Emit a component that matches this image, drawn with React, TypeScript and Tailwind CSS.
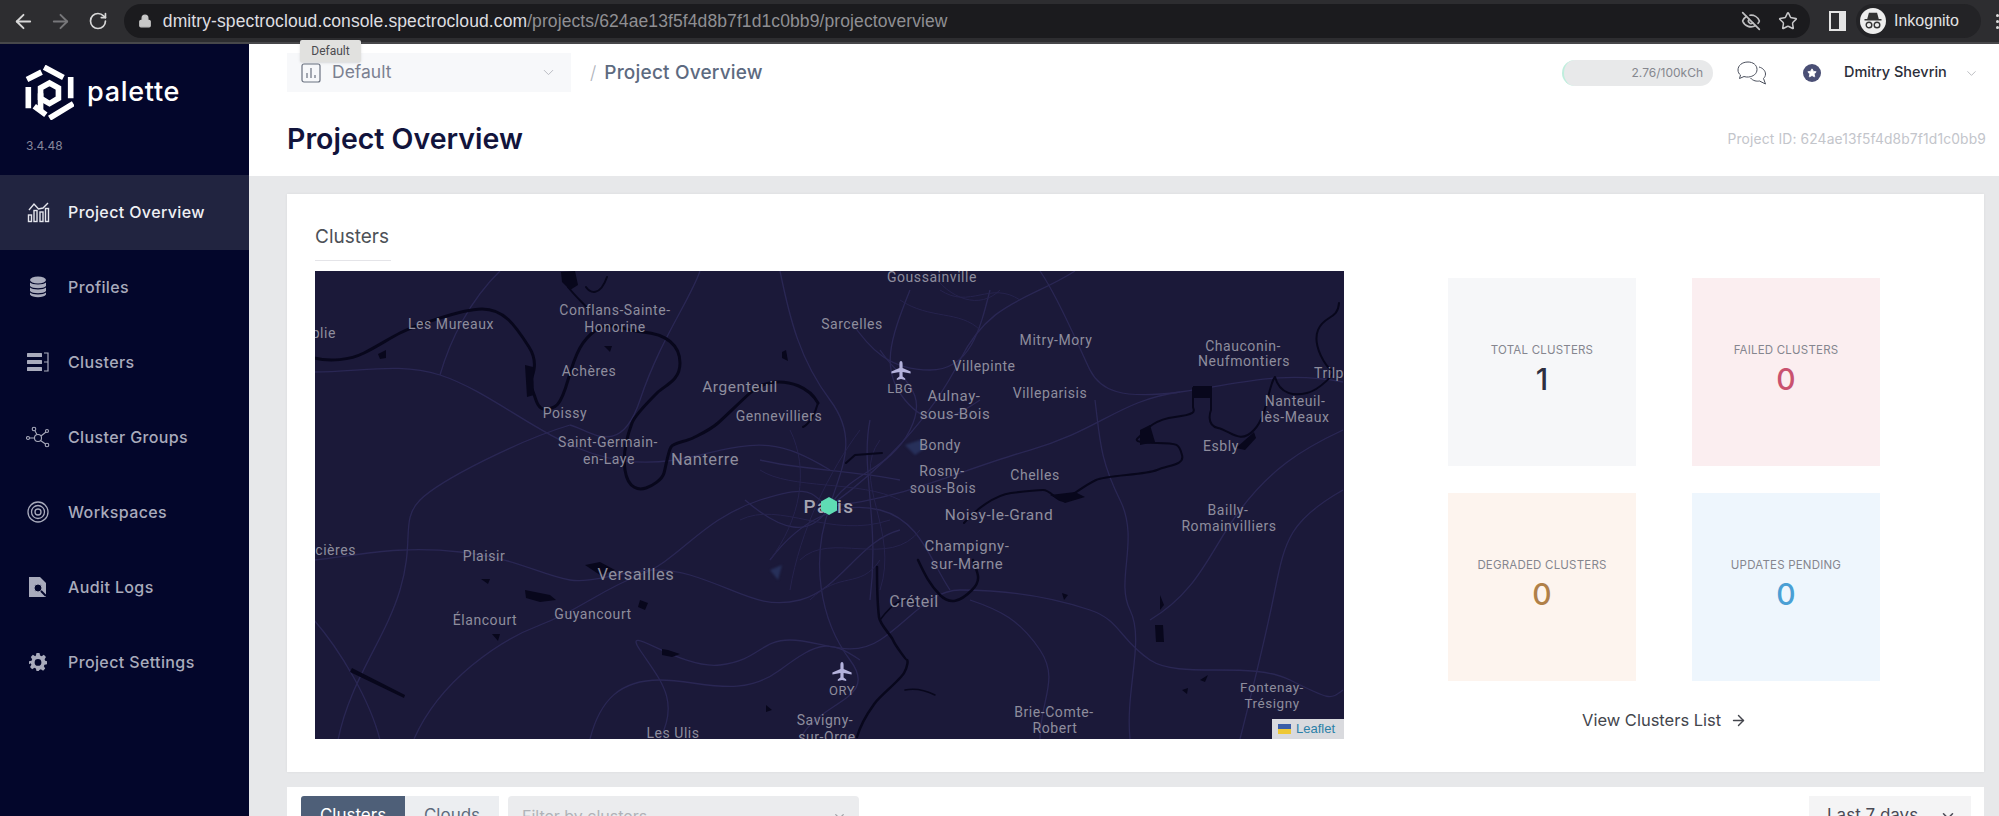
import React from "react";
import { ArrowLeft, ArrowRight, RotateCw, Lock, EyeOff, Star, ChevronDown, ArrowRight as Arrow } from "lucide-react";

const poppins = "font-['Inter','Noto_Sans',sans-serif]";

type L = [string, number, number, number?, string?];
const labels: L[] = [
  ["plie", 336, 333, 14, "end"], ["Les Mureaux", 451, 324], ["Conflans-Sainte-", 615, 310], ["Honorine", 615, 327],
  ["Achères", 589, 371], ["Poissy", 565, 413], ["Saint-Germain-", 608, 442], ["en-Laye", 609, 459],
  ["Nanterre", 705, 459, 16.5], ["Argenteuil", 740, 387, 15.5], ["Gennevilliers", 779, 416],
  ["Goussainville", 932, 277], ["Sarcelles", 852, 324], ["Mitry-Mory", 1056, 340], ["Villepinte", 984, 366],
  ["LBG", 900, 388, 13], ["Aulnay-", 954, 396, 15], ["sous-Bois", 955, 414, 15], ["Villeparisis", 1050, 393],
  ["Chauconin-", 1243, 346], ["Neufmontiers", 1244, 361], ["Trilp", 1314, 373, 14, "start"], ["Nanteuil-", 1295, 401],
  ["lès-Meaux", 1295, 417], ["Esbly", 1221, 446], ["Bondy", 940, 445], ["Rosny-", 942, 471], ["sous-Bois", 943, 488],
  ["Chelles", 1035, 475], ["Noisy-le-Grand", 999, 515, 15.5], ["Bailly-", 1228, 510], ["Romainvilliers", 1229, 526],
  ["Champigny-", 967, 546, 15], ["sur-Marne", 967, 564, 15], ["Créteil", 914, 601, 16], ["ORY", 842, 690, 13],
  ["Savigny-", 825, 720], ["sur-Orge", 827, 737], ["Brie-Comte-", 1054, 712], ["Robert", 1055, 728],
  ["Fontenay-", 1272, 687, 13.5], ["Trésigny", 1272, 703, 13.5], ["ncières", 356, 550, 14, "end"], ["Plaisir", 484, 556],
  ["Versailles", 636, 574, 16.5], ["Élancourt", 485, 620], ["Guyancourt", 593, 614], ["Les Ulis", 673, 733],
];

const roads = [
  "M314 372C360 372 400 362 440 375S520 420 560 440S640 470 700 455S780 440 830 470",
  "M314 560C360 555 400 545 460 552S540 575 570 580S640 560 690 575S760 610 800 600S860 540 900 530",
  "M338 740C350 680 385 640 400 590S400 520 420 500S520 440 570 425",
  "M414 739C440 680 500 640 540 625S600 590 640 575S700 520 760 500S810 500 830 505",
  "M660 739C680 700 660 680 640 650S680 670 720 665S760 640 790 640S850 660 880 640S930 590 960 590",
  "M830 506C900 500 960 470 1030 450S1120 400 1180 392S1280 370 1343 382",
  "M830 506C880 470 930 420 960 360S1030 300 1075 271",
  "M780 271C790 320 800 360 830 400S840 470 830 506",
  "M830 506C810 560 820 620 850 660S820 700 800 739",
  "M960 590C1020 590 1060 600 1090 610S1120 640 1150 660S1250 660 1290 680S1330 700 1343 690",
  "M1130 739C1125 690 1145 640 1130 610S1140 540 1120 500S1100 440 1095 400",
  "M1040 739C1040 700 1060 680 1040 650S1000 610 970 600",
  "M1180 392C1120 400 1100 390 1090 370S1060 300 1040 271",
  "M1240 739C1255 680 1265 640 1275 590S1290 520 1343 490",
  "M1343 430C1300 450 1270 470 1240 510S1200 590 1150 620",
  "M500 271C470 300 450 340 440 375",
  "M700 271C690 300 660 340 640 400S590 430 570 425",
  "M380 740C370 700 340 650 314 620",
  "M590 739C600 700 620 680 660 680S740 700 780 670S830 640 860 660",
  "M745 500C780 530 810 540 830 506S890 470 910 430S900 380 880 350",
  "M760 460C800 470 850 470 900 480",
  "M770 560C800 520 840 500 880 510S930 560 950 590",
  "M870 420C860 470 880 520 870 600",
  "M850 320C870 350 890 370 930 370S980 330 990 290",
  "M910 290C890 340 880 370 905 400S950 420 980 400",
];

const blobs = [
  "M561 272L575 271L578 285L570 290L562 282Z", "M378 354L386 350L386 358L380 359Z", "M604 346L612 346L610 352Z", "M782 352L786 350L788 361L782 358Z",
  "M525 365L533 367L534 395L527 397Z", "M525 590L550 595L556 600L540 602L526 598Z", "M481 579L490 579L488 584Z",
  "M492 634L500 634L498 641Z", "M662 649L668 650L680 654L672 657L662 655Z", "M352 668L405 695L404 698L350 672Z", "M585 565L600 562L615 570L600 575Z",
  "M1193 386L1212 386L1212 398L1193 398Z", "M1155 625L1163 625L1164 642L1156 642Z", "M1160 595L1164 605L1160 610Z",
  "M640 600L648 603L645 610L638 607Z", "M1050 495L1075 492L1085 497L1065 503Z", "M1140 430L1150 425L1155 442L1140 445Z",
  "M1254 432L1236 448L1245 450L1256 438Z", "M1200 680L1208 675L1205 682Z", "M1182 690L1188 688L1187 694Z", "M1062 593L1068 595L1064 600Z", "M766 705L772 710L766 712Z",
];

const Plane = ({ x, y }: { x: number; y: number }) => (
  <path transform={`translate(${x - 10} ${y - 10})`} fill="#b4b2dc" d="M10 0c1 0 1.6 1.2 1.6 3v4l8 3.6v2l-8-1.6v4.4l2.6 2V19L10 18l-4.200 1v-1.600l2.600-2V11l-8 1.600v-2l8-3.600V3c0-1.800.6-3 1.600-3z" />
);

function MapView() {
  return (
    <div className="relative w-[1029px] h-[468px] bg-[#1b1939] overflow-hidden">
      <svg viewBox="315 271 1029 468" width="1029" height="468" className="block">
        <g fill="none" stroke="#2a2754" strokeWidth="1.300" className="blur-[0.5px]">
          {roads.map((d) => <path key={d} d={d} />)}
          <path strokeWidth="1" stroke="#26234d" d="M760 470C790 490 860 480 900 500M790 430C810 470 800 520 770 560M860 430C830 470 800 530 790 590M740 520C780 500 830 540 890 520M800 560C830 530 890 570 920 530M880 440C850 480 900 530 880 590M810 600C840 570 860 590 880 560M900 300C930 320 960 310 980 330M930 271C950 300 980 310 1000 290M940 290C970 310 990 280 1020 300" />
        </g>
        <path d="M905 445L920 440L928 446L915 455Z M770 570L782 565L778 580Z" fill="#27305a" className="blur-[1px]" />
        <g className="blur-[0.5px]">
          <g fill="none" stroke="#08071c" strokeLinejoin="round" strokeLinecap="round">
            <path strokeWidth="3" d="M314 358C330 362 350 360 364 353S390 338 400 333S460 309 482 309S515 325 529 347S525 385 530 387S535 410 545 409S560 408 568 380S582 340 596 330S620 330 643 332S680 345 680 363S665 385 657 393S635 415 632 423S622 450 625 470S640 490 646 488S662 480 664 473S668 452 671 447S685 442 693 438S710 430 718 423S740 402 750 393S770 382 779 382S808 385 818 403" />
            <path strokeWidth="2" d="M818 403C815 415 808 425 803 427M568 287C575 296 585 305 589 310M586 287C590 293 600 297 607 277M846 463L855 455L882 453" />
            <path strokeWidth="2" d="M964 523C975 510 995 495 1011 493S1035 490 1043 490S1058 503 1064 500S1085 485 1096 480S1145 475 1157 470S1185 465 1182 455S1180 443 1157 443S1135 440 1139 437S1150 420 1175 417S1193 410 1193 407V388M1211 388V410S1205 425 1218 428S1240 445 1254 430S1268 385 1275 377C1280 395 1295 396 1307 393S1338 372 1332 370S1312 345 1318 330S1338 320 1339 303" />
            <path strokeWidth="2.500" d="M857 737C862 720 870 710 875 703S900 680 904 673S908 660 907 660S895 645 893 640S880 625 879 617S877 585 877 567M918 560C925 575 930 585 940 595S960 602 972 590S975 570 973 560" />
            <path strokeWidth="1.500" d="M880 620C895 600 905 595 918 605M905 690C915 688 925 690 935 695" />
          </g>
          <g fill="#08071c">{blobs.map((d) => <path key={d} d={d} />)}</g>
        </g>
        <g fill="#8e8d9d" fontFamily="Roboto, sans-serif" letterSpacing="0.55">
          {labels.map(([t, x, y, s, a], i) => (
            <text key={i} x={x} y={y} fontSize={s ?? 14} textAnchor={(a ?? "middle") as "middle" | "end" | "start"} dominantBaseline="central">{t}</text>
          ))}
          <text x="829" y="506" fontSize="19" fontWeight="500" textAnchor="middle" dominantBaseline="central" fill="#a6a5b2" letterSpacing="1.5">Paris</text>
        </g>
        <Plane x={901} y={371} />
        <Plane x={842} y={672} />
        <path d="M829 497L837 501.500V510.500L829 515L821 510.500V501.500Z" fill="#5fdcb4" />
      </svg>
      <div className="absolute right-0 bottom-0 w-[72px] h-[20px] bg-[#d9dade] flex items-center gap-[5px] pl-[6px] font-['Liberation_Sans',sans-serif] text-[13px] text-[#2a80a8]">
        <svg width="13" height="10" viewBox="0 0 13 10"><rect width="13" height="5" fill="#3b5ea8" /><rect y="5" width="13" height="5" fill="#eec836" /></svg>
        Leaflet
      </div>
    </div>
  );
}

function Logo() {
  return (
    <svg width="49" height="55" viewBox="0 0 148 165" fill="none" stroke="#fff" strokeWidth="17">
      <path d="M58 6L116 37M6 43L50 21M10 66V130M138 36V100M74 160L146 116M28 124L63 150" />
      <path d="M74 54L101 69V100L74 116L47 100V69Z" strokeWidth="17" />
      <path d="M47 85V137" strokeWidth="17" />
    </svg>
  );
}

const c = "#a9abbc";
const navIcons: Record<string, React.ReactNode> = {
  overview: (
    <svg width="23" height="22" viewBox="0 0 23 22" fill="none" stroke="#e4e5ec" strokeWidth="1.400">
      <path d="M2 9L7 3L11.500 8L16 7L21 2" />
      <rect x="1.500" y="14" width="3" height="6.500" /><rect x="7" y="9.500" width="3" height="11" /><rect x="13" y="11" width="3" height="9.500" /><rect x="18.500" y="7.500" width="3" height="13" />
    </svg>
  ),
  profiles: (
    <svg width="18" height="22" viewBox="0 0 18 22" fill={c}>
      <ellipse cx="9" cy="4" rx="8" ry="3.500" />
      <path d="M1 6.500C3 9 15 9 17 6.500V10C15 13 3 13 1 10Z" /><path d="M1 11.500C3 14 15 14 17 11.500V15C15 18 3 18 1 15Z" /><path d="M1 16.500C3 19 15 19 17 16.500V18.500C15 22 3 22 1 18.500Z" />
    </svg>
  ),
  clusters: (
    <svg width="22" height="20" viewBox="0 0 22 20" fill={c}>
      <rect x="0" y="1" width="15" height="4" rx="0.500" /><rect x="0" y="8" width="15" height="4" rx="0.500" /><rect x="0" y="15" width="15" height="4" rx="0.500" />
      <path d="M17 1H21V19H17M17 10H21" fill="none" stroke={c} strokeWidth="1.200" />
    </svg>
  ),
  groups: (
    <svg width="24" height="22" viewBox="0 0 24 22" fill="none" stroke={c} strokeWidth="1.100">
      <circle cx="12" cy="12" r="3.500" /><circle cx="8" cy="3" r="1.800" /><circle cx="21" cy="5" r="1.500" /><circle cx="2" cy="12" r="1.500" /><circle cx="21" cy="19" r="1.800" />
      <path d="M9 5L11 8.500M3.500 12H8.500M14.500 14.500L19.500 18M15 10L20 6" />
    </svg>
  ),
  workspaces: (
    <svg width="22" height="22" viewBox="0 0 22 22" fill="none" stroke={c} strokeWidth="1.300">
      <circle cx="11" cy="11" r="10" /><circle cx="11" cy="11" r="6.500" /><circle cx="11" cy="11" r="3" />
    </svg>
  ),
  audit: (
    <svg width="18" height="22" viewBox="0 0 18 22">
      <path d="M0 1H11L17 7V21H0Z" fill={c} />
      <circle cx="9" cy="12" r="4" fill="#03062b" stroke={c} strokeWidth="1" />
      <path d="M12 15L17 20" stroke="#03062b" strokeWidth="2" />
    </svg>
  ),
  settings: (
    <svg width="18" height="18" viewBox="0 0 24 24" fill={c}>
      <path fillRule="evenodd" d="M10 0h4l.8 3.400 2 .8L19.800 2.400l2.800 2.800-1.800 3 .8 2L24 11v4l-3.400.7-.8 2 1.800 3-2.800 2.800-3-1.800-2 .8L13 24h-3l-.8-3.500-2-.8-3 1.800-2.800-2.800 1.800-3-.8-2L0 15v-4l3.400-.8.8-2-1.800-3L5.200 2.400l3 1.800 1-.8zM12 8a4.500 4.500 0 1 0 0 9 4.500 4.500 0 0 0 0-9z" />
    </svg>
  ),
};

const nav: [string, string][] = [
  ["overview", "Project Overview"], ["profiles", "Profiles"], ["clusters", "Clusters"], ["groups", "Cluster Groups"],
  ["workspaces", "Workspaces"], ["audit", "Audit Logs"], ["settings", "Project Settings"],
];

function Stat({ label, value, bg, color }: { label: string; value: string; bg: string; color: string }) {
  return (
    <div className={`w-[188px] h-[188px] pt-[64px] flex flex-col items-center ${bg}`}>
      <div className="text-[11.500px] leading-[16px] tracking-[0.2px] text-[#85868f]">{label}</div>
      <div className={`text-[30px] leading-[38px] mt-[2px] font-medium ${color}`}>{value}</div>
    </div>
  );
}

export default function App() {
  return (
    <div className={`w-[1999px] h-[816px] overflow-hidden flex flex-col ${poppins}`}>
      <div className="h-[44px] shrink-0 bg-[#2d2d30] border-b-2 border-[#47474a] flex items-center pl-[12px] pr-[0px] font-['Liberation_Sans',sans-serif]">
        <ArrowLeft size={23} color="#d8d8d8" strokeWidth={2} />
        <ArrowRight size={23} color="#77777a" strokeWidth={2} className="ml-[14px]" />
        <RotateCw size={20} color="#d8d8d8" strokeWidth={2} className="ml-[16px]" />
        <div className="ml-[16px] w-[1690px] h-[34px] rounded-full bg-[#1b1b1e] flex items-center pl-[14px] pr-[12px]">
          <Lock size={14} color="#c8c8c8" fill="#c8c8c8" strokeWidth={2} />
          <div className="ml-[11px] text-[17.500px] tracking-[0.1px] text-[#dedee0] whitespace-nowrap">
            dmitry-spectrocloud.console.spectrocloud.com<span className="text-[#8f8f93]">/projects/624ae13f5f4d8b7f1d1c0bb9/projectoverview</span>
          </div>
          <EyeOff size={20} color="#c0c0c2" strokeWidth={2} className="ml-auto" />
          <Star size={20} color="#c8c8ca" strokeWidth={1.800} className="ml-[17px]" />
        </div>
        <div className="ml-[19px] w-[17px] h-[20px] border-[2.500px] border-[#e4e4e4] border-r-[7px] shrink-0" />
        <div className="ml-[10px] h-[34px] w-[125px] rounded-full bg-[#232326] flex items-center pl-[4px] shrink-0">
          <div className="w-[26px] h-[26px] rounded-full bg-[#ededed] flex items-center justify-center">
            <svg width="20" height="18" viewBox="0 0 20 18" fill="none">
              <path d="M5 7L6.500 1.500H13.500L15 7ZM1.500 7.800H18.500" stroke="#333" strokeWidth="1.500" fill="#333" />
              <circle cx="6" cy="13" r="2.800" stroke="#333" strokeWidth="1.400" /><circle cx="14" cy="13" r="2.800" stroke="#333" strokeWidth="1.400" />
            </svg>
          </div>
          <span className="ml-[8px] text-[16px] text-[#e2e2e4]">Inkognito</span>
        </div>
        <div className="ml-[15px] flex flex-col gap-[3px] shrink-0">
          <span className="w-[3px] h-[3px] bg-[#ddd] rounded-full" /><span className="w-[3px] h-[3px] bg-[#ddd] rounded-full" /><span className="w-[3px] h-[3px] bg-[#ddd] rounded-full" />
        </div>
      </div>

      <div className="flex-1 flex min-h-0">
        <aside className="w-[249px] shrink-0 bg-[#03062b] flex flex-col">
          <div className="h-[131px] shrink-0 pl-[25px] pt-[21px]">
            <div className="flex items-center">
              <Logo />
              <span className="ml-[13px] text-[27px] leading-[30px] font-medium tracking-[0.7px] text-white mt-[-2px]">palette</span>
            </div>
            <div className="mt-[19px] ml-[1px] text-[12px] leading-[14px] text-[#85879b]">3.4.48</div>
          </div>
          {nav.map(([k, t], i) => (
            <div key={k} className={`h-[75px] shrink-0 flex items-center pb-[2px] ${i === 0 ? "bg-[#212440] text-[#eff0f4]" : "text-[#a9abbc]"}`}>
              <div className="w-[68px] pl-[26px] flex justify-start">
                <div className="w-[24px] flex justify-center">{navIcons[k]}</div>
              </div>
              <span className="text-[16px] tracking-[0.38px] font-medium">{t}</span>
            </div>
          ))}
        </aside>

        <main className="flex-1 min-w-0 bg-[#e7e8ea] flex flex-col">
          <header className="h-[132px] shrink-0 bg-white relative">
            <div className="absolute left-[51px] top-[-4px] w-[61px] h-[22px] bg-[#e1e1df] rounded-[2px] flex items-center justify-center text-[12px] text-[#4b4b4f] font-['Roboto',sans-serif] shadow-sm">Default</div>
            <div className="flex items-start pl-[38px] pt-[9px]">
              <div className="w-[284px] h-[39px] bg-[#f7f8fa] flex items-center pl-[14px] pr-[14px]">
                <svg width="20" height="20" viewBox="0 0 20 20" fill="none" stroke="#6b7280" strokeWidth="1.200"><rect x="1" y="1" width="18" height="18" rx="2" /><path d="M6 15V10M10 15V5M14 15V12" /></svg>
                <span className="ml-[11px] text-[17.500px] text-[#7b8090]">Default</span>
                <ChevronDown size={17} color="#b6b8bf" strokeWidth={1.300} className="ml-auto" />
              </div>
              <span className="ml-[19px] mt-[6px] text-[18px] text-[#aeb2ba] font-light">/</span>
              <span className="ml-[8px] mt-[6px] text-[19px] leading-[27px] font-medium tracking-[0.2px] text-[#5d6a80]">Project Overview</span>
              <div className="ml-auto mt-[7px] flex items-center pr-[20px]">
                <div className="w-[151px] h-[26px] rounded-full bg-[#e8e9ea] border-l-2 border-[#bfeedd] flex items-center justify-end pr-[10px] text-[12px] text-[#85878e]">2.76/100kCh</div>
                <svg width="30" height="24" viewBox="0 0 30 24" fill="none" stroke="#4a4f5c" strokeWidth="1" className="ml-[24px]">
                  <path d="M11 1C5 1 1 4.500 1 9C1 11 2 13 3.500 14L2.500 17.500L7 15.500C8.500 16 10 16.200 11.500 16C16 15.600 20 13 20 8.500C20 4 16 1 11 1Z" />
                  <path d="M22 6C26 7 28.500 10 28.500 13C28.500 15 27.500 16.500 26.500 17.500L28.500 23L22.500 20C20 20.500 16 20 13.500 17" />
                </svg>
                <div className="ml-[36px] w-[18px] h-[18px] rounded-full bg-[#4a4f75] flex items-center justify-center">
                  <Star size={10} color="#fff" fill="#fff" />
                </div>
                <span className="ml-[23px] text-[14.500px] font-medium text-[#2b2e3a] w-[107px] whitespace-nowrap mt-[-2px]">Dmitry Shevrin</span>
                <ChevronDown size={15} color="#a6a8ae" strokeWidth={1.200} className="ml-[13px]" />
              </div>
            </div>
            <div className="flex items-center justify-between pl-[38px] pr-[13px] mt-[29px]">
              <h1 className="text-[28.500px] leading-[36px] font-semibold text-[#12143c]">Project Overview</h1>
              <span className="text-[13.800px] tracking-[0.15px] text-[#c3c5cb]">Project ID: 624ae13f5f4d8b7f1d1c0bb9</span>
            </div>
          </header>

          <div className="flex-1 min-h-0 pl-[38px] pr-[15px] pt-[18px] overflow-hidden">
            <section className="h-[578px] bg-white shadow-[0_0_3px_rgba(0,0,0,0.06)] pl-[28px] pt-[29px] flex">
              <div>
                <div className="w-[76px] h-[38px] border-b border-[#e4e4e8] text-[19px] leading-[28px] text-[#4d5157]">Clusters</div>
                <div className="mt-[10px]"><MapView /></div>
              </div>
              <div className="ml-[104px] pt-[55px] text-center">
                <div className="grid grid-cols-[188px_188px] gap-x-[56px] gap-y-[27px]">
                  <Stat label="TOTAL CLUSTERS" value="1" bg="bg-[#f6f7f9]" color="text-[#2e3040]" />
                  <Stat label="FAILED CLUSTERS" value="0" bg="bg-[#fbeef0]" color="text-[#c9526f]" />
                  <Stat label="DEGRADED CLUSTERS" value="0" bg="bg-[#fdf4ee]" color="text-[#b08048]" />
                  <Stat label="UPDATES PENDING" value="0" bg="bg-[#eef6fd]" color="text-[#4a9fd4]" />
                </div>
                <div className="mt-[27px] ml-[134px] w-[170px] flex items-center gap-[9px] text-[16.500px] leading-[24px] text-[#44464d] whitespace-nowrap">
                  View Clusters List <Arrow size={17} color="#44464d" strokeWidth={2} />
                </div>
              </div>
            </section>
            <section className="mt-[15px] h-[60px] bg-white flex items-start pl-[14px] pr-[13px] pt-[9px]">
              <div className="w-[104px] h-[40px] bg-[#4e5f78] text-white text-[17px] flex items-center justify-center rounded-tl-[3px]">Clusters</div>
              <div className="w-[94px] h-[40px] bg-[#eceef1] text-[#5d6b7d] text-[17px] flex items-center justify-center">Clouds</div>
              <div className="ml-[9px] w-[351px] h-[40px] bg-[#ebecee] rounded-t-[4px] flex items-center pl-[14px] pr-[12px] text-[16px] text-[#b0b3b8]">
                Filter by clusters<ChevronDown size={15} color="#a0a3a8" className="ml-auto" />
              </div>
              <div className="ml-auto w-[162px] h-[40px] bg-[#f4f4f5] flex items-center pl-[18px] pr-[14px] text-[17px] text-[#4a4a55] whitespace-nowrap">
                Last 7 days<ChevronDown size={18} color="#4a4a55" className="ml-auto" />
              </div>
            </section>
          </div>
        </main>
      </div>
    </div>
  );
}
